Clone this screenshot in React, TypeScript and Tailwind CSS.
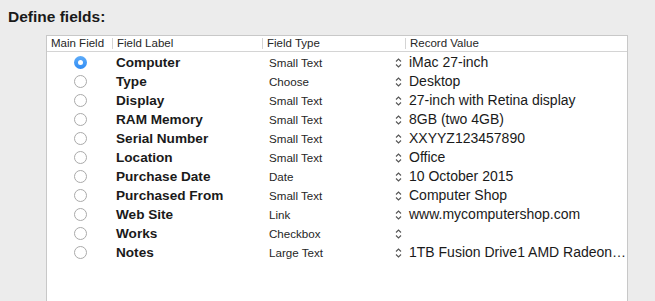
const rows = [
  { label: 'Computer', type: 'Small Text', value: 'iMac 27-inch', main: true },
  { label: 'Type', type: 'Choose', value: 'Desktop' },
  { label: 'Display', type: 'Small Text', value: '27-inch with Retina display' },
  { label: 'RAM Memory', type: 'Small Text', value: '8GB (two 4GB)' },
  { label: 'Serial Number', type: 'Small Text', value: 'XXYYZ123457890' },
  { label: 'Location', type: 'Small Text', value: 'Office' },
  { label: 'Purchase Date', type: 'Date', value: '10 October 2015' },
  { label: 'Purchased From', type: 'Small Text', value: 'Computer Shop' },
  { label: 'Web Site', type: 'Link', value: 'www.mycomputershop.com' },
  { label: 'Works', type: 'Checkbox', value: '' },
  { label: 'Notes', type: 'Large Text', value: '1TB Fusion Drive1 AMD Radeon…' },
]

const cols = 'grid grid-cols-[65px_150px_143px_1fr]'

function Stepper() {
  return (
    <svg width="7" height="10" viewBox="0 0 7 10" className="shrink-0">
      <path d="M1 3.5 L3.5 1 L6 3.5 M1 6.5 L3.5 9 L6 6.5" fill="none" stroke="#555" strokeWidth="1.1" />
    </svg>
  )
}

function Radio({ on }: { on?: boolean }) {
  if (on) {
    return (
      <div className="w-[13px] h-[13px] rounded-full bg-gradient-to-b from-[#5eacf9] to-[#2f8cf4] flex items-center justify-center">
        <div className="w-[5px] h-[5px] rounded-full bg-white" />
      </div>
    )
  }
  return <div className="w-[13px] h-[13px] rounded-full border border-[#aaaaaa] bg-white" />
}

export default function App() {
  return (
    <div className="w-[655px] h-[301px] bg-[#ececec] overflow-hidden font-['Liberation_Sans',Arial,sans-serif] text-[#1a1a1a]">
      <h1 className="pl-2 pt-[8px] h-[35px] text-[15.5px] font-bold leading-[17px]">Define fields:</h1>

      <div className="ml-[46px] w-[582px] h-[280px] bg-white border border-[#c8c8c8]">
        {/* header */}
        <div className={`${cols} h-[16px] border-b border-[#d4d4d4] text-[11.5px] leading-[15px] text-[#262626]`}>
          <div className="pl-1">Main Field</div>
          <div className="flex items-center">
            <span className="w-px h-[11px] bg-[#d4d4d4] mr-1" />Field Label
          </div>
          <div className="flex items-center">
            <span className="w-px h-[11px] bg-[#d4d4d4] mr-1" />Field Type
          </div>
          <div className="flex items-center">
            <span className="w-px h-[11px] bg-[#d4d4d4] mr-1" />Record Value
          </div>
        </div>

        {/* rows */}
        <div className="pt-[1px]">
          {rows.map((r) => (
            <div key={r.label} className={`${cols} h-[19px] items-center`}>
              <div className="pl-[27px] flex items-center">
                <Radio on={r.main} />
              </div>
              <div className="pl-[4px] text-[13.6px] font-bold leading-[19px]">{r.label}</div>
              <div className="pl-[7px] text-[11.6px] leading-[19px] text-[#262626]">{r.type}</div>
              <div className="flex items-center gap-[7px] min-w-0 -ml-[10px]">
                <Stepper />
                <span className="text-[14px] leading-[19px] whitespace-nowrap">{r.value}</span>
              </div>
            </div>
          ))}
        </div>
      </div>
    </div>
  )
}
